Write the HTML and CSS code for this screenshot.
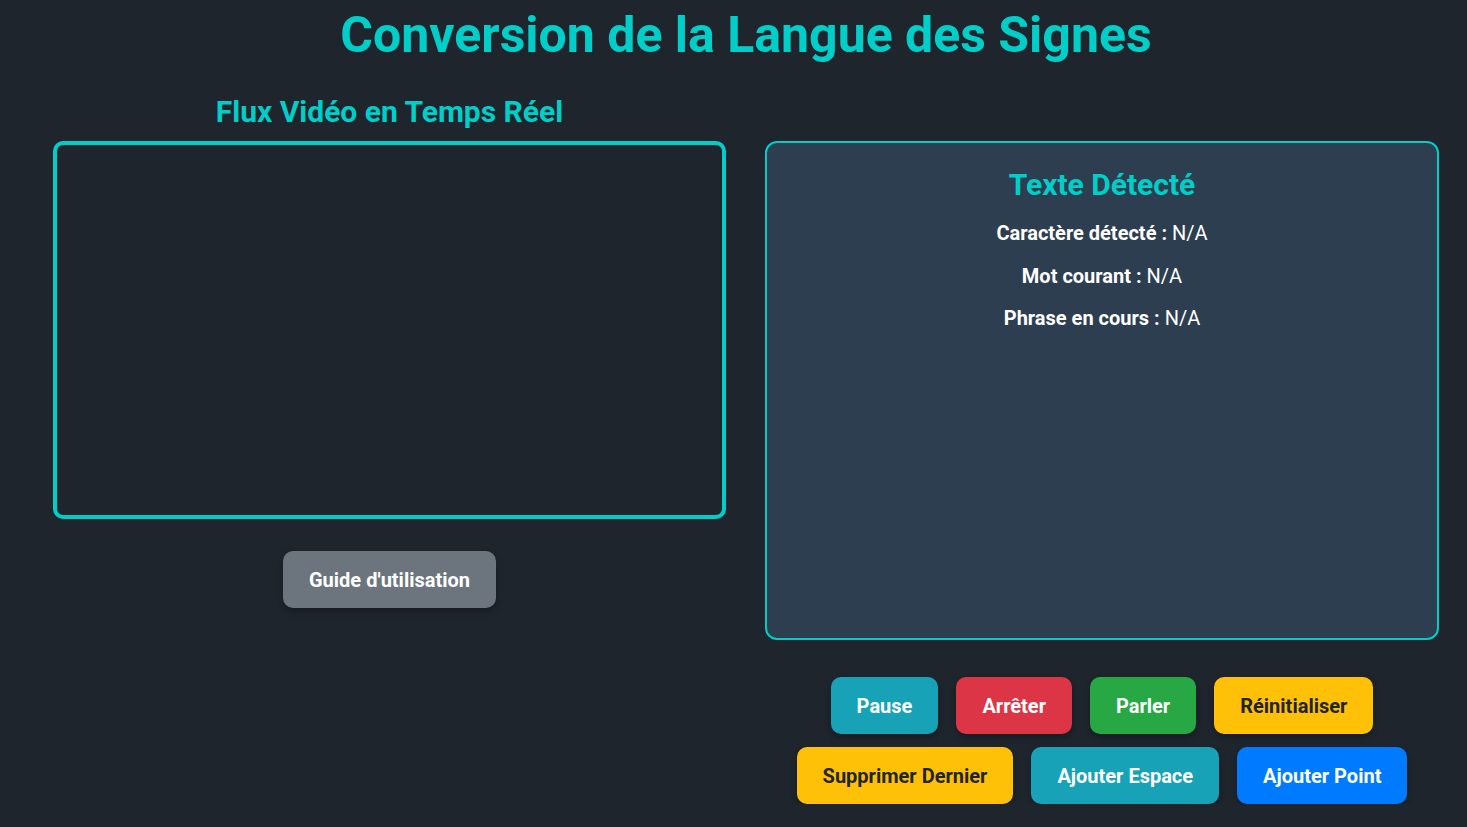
FILE: index.html
```html
<!DOCTYPE html>
<html lang="fr">
<head>
<meta charset="utf-8">
<title>Conversion de la Langue des Signes</title>
<link rel="stylesheet" href="styles.css">
</head>
<body>
<div class="page">
  <h1 class="title">Conversion de la Langue des Signes</h1>
  <div class="columns">
    <div class="col-left">
      <h2 class="subtitle">Flux Vidéo en Temps Réel</h2>
      <div class="video"></div>
      <button class="btn btn-gray guide">Guide d'utilisation</button>
    </div>
    <div class="col-right">
      <div class="panel">
        <h2 class="panel-title">Texte Détecté</h2>
        <p class="line"><b>Caractère détecté :</b> N/A</p>
        <p class="line"><b>Mot courant :</b> N/A</p>
        <p class="line"><b>Phrase en cours :</b> N/A</p>
      </div>
      <div class="controls">
        <div class="row">
          <button class="btn btn-info">Pause</button>
          <button class="btn btn-red">Arrêter</button>
          <button class="btn btn-green">Parler</button>
          <button class="btn btn-yellow">Réinitialiser</button>
        </div>
        <div class="row">
          <button class="btn btn-yellow">Supprimer Dernier</button>
          <button class="btn btn-info">Ajouter Espace</button>
          <button class="btn btn-blue">Ajouter Point</button>
        </div>
      </div>
    </div>
  </div>
</div>
</body>
</html>
```

FILE: styles.css
```css
* { box-sizing: border-box; }
html, body {
  margin: 0;
  padding: 0;
  background: #1f252d;
  font-family: Roboto, "Liberation Sans", sans-serif;
  color: #ffffff;
}
.page {
  padding: 0 28px 0 53px;
}
.title {
  margin: 0;
  padding-top: 6px;
  height: 80px;
  text-align: center;
  font-size: 50px;
  font-weight: 700;
  color: #00cec9;
  line-height: 58px;
}
.columns {
  display: flex;
  gap: 39px;
}
.col-left {
  width: 673px;
  display: flex;
  flex-direction: column;
  align-items: center;
}
.subtitle {
  margin: 0;
  font-size: 30px;
  font-weight: 700;
  color: #00cec9;
  line-height: 63px;
  height: 61px;
}
.video {
  width: 673px;
  height: 378px;
  border: 4px solid #00cec9;
  border-radius: 10px;
  background: #1f252d;
}
.guide {
  margin-top: 32px;
}
.col-right {
  flex: 1;
  padding-top: 61px;
  display: flex;
  flex-direction: column;
  align-items: center;
}
.panel {
  width: 674px;
  height: 499px;
  border: 2px solid #00cec9;
  border-radius: 12px;
  background: #2c3e50;
  padding-top: 22px;
  text-align: center;
}
.panel-title {
  margin: 0 0 7px;
  font-size: 30px;
  font-weight: 700;
  color: #00cec9;
  line-height: 40px;
}
.line {
  margin: 0;
  font-size: 20px;
  line-height: 42.5px;
  color: #ffffff;
}
.line b { font-weight: 700; }
.controls {
  margin-top: 37px;
  display: flex;
  flex-direction: column;
  gap: 13px;
  align-items: center;
}
.row {
  display: flex;
  gap: 18px;
}
.btn {
  height: 57px;
  padding: 0 26px;
  border: none;
  border-radius: 10px;
  font-family: Roboto, "Liberation Sans", sans-serif;
  font-size: 20px;
  font-weight: 700;
  color: #ffffff;
  box-shadow: 0 3px 6px rgba(0, 0, 0, 0.25);
  cursor: pointer;
}
.btn-gray { background: #6c757d; }
.btn-info { background: #17a2b8; }
.btn-red { background: #dc3545; }
.btn-green { background: #28a745; }
.btn-yellow { background: #ffc107; color: #212529; }
.btn-blue { background: #007bff; }
```
